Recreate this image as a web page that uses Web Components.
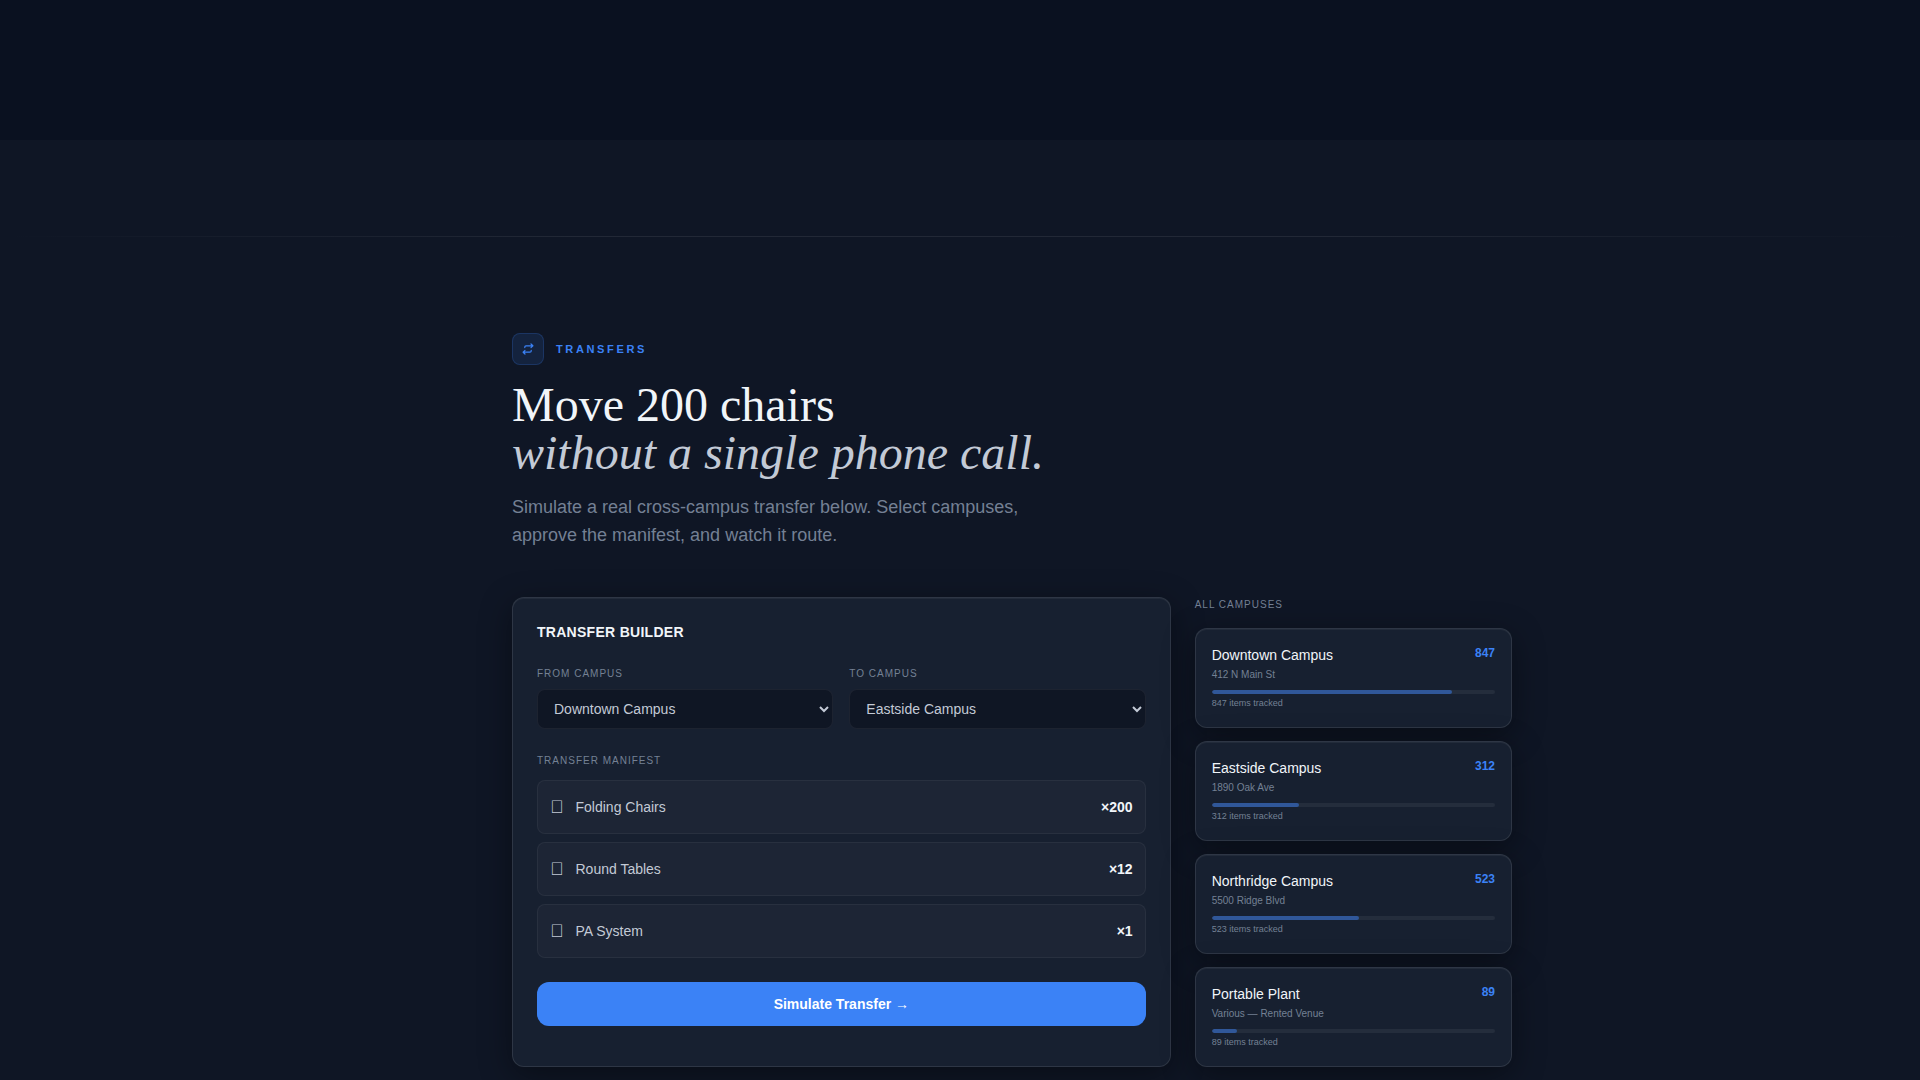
<!DOCTYPE html>
<html lang="en">
<head>
<meta charset="utf-8">
<meta name="viewport" content="width=device-width, initial-scale=1">
<title>Transfers</title>
<style>
    :root {
        --blue: #3b82f6;
        --text: #f1f5f9;
        --soft: #c3cad6;
        --muted: #748094;
        --card: #172030;
        --line: rgba(255, 255, 255, 0.1);
        --sans: "Liberation Sans", Arial, sans-serif;
        --serif: "Liberation Serif", "Times New Roman", serif;
    }
    body {
        margin: 0;
        background: #0f1625;
        color: var(--text);
        font-family: var(--sans);
    }
</style>
</head>
<body>
<transfer-page>
    <section-heading slot="heading" label="Transfers">
        <span slot="title">Move 200 chairs</span>
        <em slot="subtitle">without a single phone call.</em>
        <span slot="text">Simulate a real cross-campus transfer below. Select campuses, approve the manifest, and watch it route.</span>
    </section-heading>
    <transfer-builder slot="builder">
        <campus-select slot="fields" label="From Campus" value="Downtown Campus"></campus-select>
        <campus-select slot="fields" label="To Campus" value="Eastside Campus"></campus-select>
        <manifest-item icon="&#xE000;" count="200">Folding Chairs</manifest-item>
        <manifest-item icon="&#xE000;" count="12">Round Tables</manifest-item>
        <manifest-item icon="&#xE000;" count="1">PA System</manifest-item>
    </transfer-builder>
    <campus-list slot="campuses">
        <campus-card name="Downtown Campus" address="412 N Main St" items="847" fill="85"></campus-card>
        <campus-card name="Eastside Campus" address="1890 Oak Ave" items="312" fill="31"></campus-card>
        <campus-card name="Northridge Campus" address="5500 Ridge Blvd" items="523" fill="52"></campus-card>
        <campus-card name="Portable Plant" address="Various — Rented Venue" items="89" fill="9"></campus-card>
    </campus-list>
</transfer-page>

<script>
const CAMPUSES = ['Downtown Campus', 'Eastside Campus', 'Northridge Campus', 'Portable Plant'];

class TransferPage extends HTMLElement {
    constructor() {
        super();
        this.attachShadow({ mode: 'open' });
        this.shadowRoot.innerHTML = `
            <style>
                :host {
                    display: block;
                    min-height: 100vh;
                }
                .band {
                    height: 140px;
                    background: #0a1120;
                }
                hr {
                    height: 1px;
                    margin: 96px 0;
                    border: 0;
                    background: linear-gradient(90deg, transparent, rgba(255, 255, 255, 0.08) 30%, rgba(255, 255, 255, 0.08) 70%, transparent);
                }
                main {
                    box-sizing: border-box;
                    max-width: 1104px;
                    margin: 0 auto;
                    padding: 0 0 13px 104px;
                }
                .grid {
                    display: grid;
                    grid-template-columns: repeat(12, 1fr);
                    gap: 24px;
                    margin-top: 48px;
                }
                slot[name="builder"]::slotted(*) { grid-column: span 8; }
                slot[name="campuses"]::slotted(*) { grid-column: span 4; }
            </style>
            <div class="band"></div>
            <hr>
            <main>
                <slot name="heading"></slot>
                <div class="grid">
                    <slot name="builder"></slot>
                    <slot name="campuses"></slot>
                </div>
            </main>
        `;
    }
}

class SectionHeading extends HTMLElement {
    constructor() {
        super();
        this.attachShadow({ mode: 'open' });
        this.shadowRoot.innerHTML = `
            <style>
                :host { display: block; }
                .eyebrow {
                    display: flex;
                    align-items: center;
                    gap: 12px;
                    color: var(--blue);
                    font-size: 11px;
                    font-weight: 700;
                    letter-spacing: 0.24em;
                    text-transform: uppercase;
                }
                .icon {
                    box-sizing: border-box;
                    display: grid;
                    place-items: center;
                    width: 32px;
                    height: 32px;
                    border: 1px solid rgba(59, 130, 246, 0.2);
                    border-radius: 8px;
                    background: rgba(59, 130, 246, 0.12);
                }
                h2 {
                    margin: 16px 0;
                    font: 400 48px/48px var(--serif);
                }
                h2 slot { display: block; }
                h2 slot[name="subtitle"] { color: var(--soft); }
                p {
                    max-width: 560px;
                    margin: 0;
                    color: var(--muted);
                    font-size: 18px;
                    line-height: 28px;
                }
            </style>
            <div class="eyebrow">
                <span class="icon">
                    <svg width="14" height="14" viewBox="0 0 14 14" fill="none" stroke="currentColor" stroke-width="1.2" stroke-linecap="round" stroke-linejoin="round">
                        <path d="M3.800 5.600V5q0-1.200 1.200-1.200h6.600M10 2l1.900 1.800L10 5.600M10.200 8.400V9q0 1.200-1.200 1.200H2.400M4 8.400l-1.900 1.800L4 12"/>
                    </svg>
                </span>
                <span>${this.getAttribute('label')}</span>
            </div>
            <h2><slot name="title"></slot><slot name="subtitle"></slot></h2>
            <p><slot name="text"></slot></p>
        `;
    }
}

class TransferBuilder extends HTMLElement {
    constructor() {
        super();
        this.attachShadow({ mode: 'open' });
        this.shadowRoot.innerHTML = `
            <style>
                :host {
                    box-sizing: border-box;
                    display: block;
                    padding: 24px;
                    border: 1px solid var(--line);
                    border-radius: 12px;
                    background: var(--card);
                    box-shadow: 0 8px 32px rgba(0, 0, 0, 0.4), inset 0 1px 0 rgba(255, 255, 255, 0.05);
                }
                h3 {
                    margin: 0 0 24px;
                    font-size: 14px;
                    line-height: 20px;
                    letter-spacing: 0.02em;
                    text-transform: uppercase;
                }
                .fields {
                    display: grid;
                    grid-template-columns: 1fr 1fr;
                    gap: 16px;
                    margin-bottom: 24px;
                }
                h4 {
                    margin: 0 0 12px;
                    color: var(--muted);
                    font-size: 10px;
                    font-weight: 400;
                    line-height: 15px;
                    letter-spacing: 1px;
                    text-transform: uppercase;
                }
                .items {
                    display: flex;
                    flex-direction: column;
                    gap: 8px;
                    margin-bottom: 24px;
                }
                button {
                    width: 100%;
                    height: 44px;
                    border: 0;
                    border-radius: 12px;
                    background: var(--blue);
                    color: #fff;
                    font: 700 14px var(--sans);
                    cursor: pointer;
                }
            </style>
            <h3>Transfer Builder</h3>
            <div class="fields"><slot name="fields"></slot></div>
            <h4>Transfer Manifest</h4>
            <div class="items"><slot></slot></div>
            <button type="button">Simulate Transfer →</button>
        `;
    }
}

class CampusSelect extends HTMLElement {
    constructor() {
        super();
        this.attachShadow({ mode: 'open' });
        const value = this.getAttribute('value');
        const options = CAMPUSES.map(c => `<option${c === value ? ' selected' : ''}>${c}</option>`).join('');
        this.shadowRoot.innerHTML = `
            <style>
                :host { display: block; }
                label {
                    display: block;
                    margin-bottom: 8px;
                    color: var(--muted);
                    font-size: 10px;
                    line-height: 15px;
                    letter-spacing: 1px;
                    text-transform: uppercase;
                }
                select {
                    box-sizing: border-box;
                    display: block;
                    width: 100%;
                    height: 40px;
                    padding: 0 12px;
                    border: 1px solid rgba(255, 255, 255, 0.06);
                    border-radius: 8px;
                    background: #0f1624;
                    color: var(--soft);
                    font: 14px var(--sans);
                }
            </style>
            <label for="campus">${this.getAttribute('label')}</label>
            <select id="campus">${options}</select>
        `;
    }
}

class ManifestItem extends HTMLElement {
    constructor() {
        super();
        this.attachShadow({ mode: 'open' });
        this.shadowRoot.innerHTML = `
            <style>
                :host {
                    display: flex;
                    align-items: center;
                    gap: 12px;
                    padding: 12px;
                    border: 1px solid rgba(255, 255, 255, 0.05);
                    border-radius: 8px;
                    background: #1d2535;
                    color: var(--soft);
                    font-size: 14px;
                    line-height: 28px;
                }
                .icon { font-size: 18px; }
                .name { flex: 1; }
                strong { color: var(--text); }
            </style>
            <span class="icon">${this.getAttribute('icon')}</span>
            <span class="name"><slot></slot></span>
            <strong>×${this.getAttribute('count')}</strong>
        `;
    }
}

class CampusList extends HTMLElement {
    constructor() {
        super();
        this.attachShadow({ mode: 'open' });
        this.shadowRoot.innerHTML = `
            <style>
                :host {
                    display: flex;
                    flex-direction: column;
                    gap: 13px;
                }
                h3 {
                    margin: 0 0 3px;
                    color: var(--muted);
                    font-size: 10px;
                    font-weight: 400;
                    line-height: 15px;
                    letter-spacing: 1px;
                    text-transform: uppercase;
                }
            </style>
            <h3>All Campuses</h3>
            <slot></slot>
        `;
    }
}

class CampusCard extends HTMLElement {
    constructor() {
        super();
        this.attachShadow({ mode: 'open' });
        const items = this.getAttribute('items');
        this.shadowRoot.innerHTML = `
            <style>
                :host {
                    display: block;
                    padding: 16px;
                    border: 1px solid var(--line);
                    border-radius: 12px;
                    background: var(--card);
                    box-shadow: 0 8px 32px rgba(0, 0, 0, 0.4), inset 0 1px 0 rgba(255, 255, 255, 0.05);
                }
                .top {
                    display: flex;
                    justify-content: space-between;
                    align-items: flex-start;
                    margin-bottom: 8px;
                }
                .name {
                    margin-bottom: 2px;
                    font-size: 14px;
                    line-height: 20px;
                }
                .address {
                    color: var(--muted);
                    font-size: 10px;
                    line-height: 15px;
                }
                strong {
                    color: var(--blue);
                    font-size: 12px;
                    line-height: 16px;
                }
                .bar {
                    height: 4px;
                    overflow: hidden;
                    border-radius: 2px;
                    background: rgba(255, 255, 255, 0.06);
                }
                .fill {
                    height: 100%;
                    width: ${this.getAttribute('fill')}%;
                    border-radius: 2px;
                    background: rgba(59, 130, 246, 0.5);
                }
                .note {
                    margin-top: 2px;
                    color: var(--muted);
                    font-size: 9px;
                    line-height: 15px;
                }
            </style>
            <div class="top">
                <div>
                    <div class="name">${this.getAttribute('name')}</div>
                    <div class="address">${this.getAttribute('address')}</div>
                </div>
                <strong>${items}</strong>
            </div>
            <div class="bar"><div class="fill"></div></div>
            <div class="note">${items} items tracked</div>
        `;
    }
}

customElements.define('transfer-page', TransferPage);
customElements.define('section-heading', SectionHeading);
customElements.define('transfer-builder', TransferBuilder);
customElements.define('campus-select', CampusSelect);
customElements.define('manifest-item', ManifestItem);
customElements.define('campus-list', CampusList);
customElements.define('campus-card', CampusCard);
</script>
</body>
</html>
